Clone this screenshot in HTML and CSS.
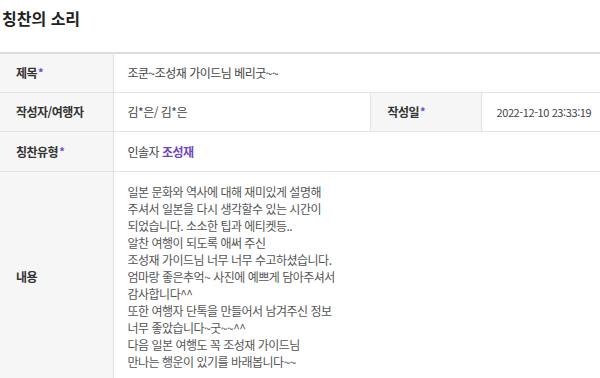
FILE: index.html
```html
<!DOCTYPE html>
<html lang="ko">
<head>
    <meta charset="UTF-8">
    <meta name="viewport" content="width=device-width, initial-scale=1.0">
    <title>칭찬의 소리</title>
    <link rel="stylesheet" href="styles.css">
</head>
<body>
    <section class="praise-view">
        <h2 class="page-title">칭찬의 소리</h2>

        <table class="view-table">
            <colgroup>
                <col class="col-th">
                <col>
                <col class="col-th2">
                <col class="col-date">
            </colgroup>
            <tbody>
                <tr class="row-title">
                    <th>제목<span class="req">*</span></th>
                    <td colspan="3">조쿤~조성재 가이드님 베리굿~~</td>
                </tr>
                <tr class="row-writer">
                    <th>작성자/여행자</th>
                    <td>김*은/ 김*은</td>
                    <th>작성일<span class="req">*</span></th>
                    <td class="date">2022-12-10 23:33:19</td>
                </tr>
                <tr class="row-type">
                    <th>칭찬유형<span class="req">*</span></th>
                    <td colspan="3">인솔자 <strong class="guide">조성재</strong></td>
                </tr>
                <tr class="row-content">
                    <th>내용</th>
                    <td colspan="3">
                        <p class="content">일본 문화와 역사에 대해 재미있게 설명해<br>
                        주셔서 일본을 다시 생각할수 있는 시간이<br>
                        되었습니다. 소소한 팁과 에티켓등..<br>
                        알찬 여행이 되도록 애써 주신<br>
                        조성재 가이드님 너무 너무 수고하셨습니다.<br>
                        엄마랑 좋은추억~ 사진에 예쁘게 담아주셔서<br>
                        감사합니다^^<br>
                        또한 여행자 단톡을 만들어서 남겨주신 정보<br>
                        너무 좋았습니다~굿~~^^<br>
                        다음 일본 여행도 꼭 조성재 가이드님<br>
                        만나는 행운이 있기를 바래봅니다~~</p>
                    </td>
                </tr>
            </tbody>
        </table>
    </section>
</body>
</html>
```

FILE: styles.css
```css
* {
    margin: 0;
    padding: 0;
    box-sizing: border-box;
}

body {
    font-family: "Noto Sans CJK KR", "Noto Sans", sans-serif;
    color: #333;
    background: #fff;
}

.page-title {
    font-size: 16px;
    font-weight: bold;
    color: #222;
    line-height: 22px;
    padding: 7px 0 0 2px;
    height: 52px;
}

.view-table {
    width: 100%;
    border-collapse: collapse;
    table-layout: fixed;
    border-top: 2px solid #ddd;
    font-size: 12px;
    letter-spacing: -0.5px;
}

.col-th {
    width: 113px;
}

.col-th2 {
    width: 111px;
}

.col-date {
    width: 118px;
}

.view-table th {
    background: #f6f6f6;
    font-weight: bold;
    color: #333;
    text-align: left;
    padding: 0 0 0 16px;
    border-bottom: 1px solid #e3e3e3;
    border-right: 1px solid #e3e3e3;
}

.view-table td {
    color: #444;
    padding: 0 0 0 14px;
    border-bottom: 1px solid #e3e3e3;
    border-right: 1px solid #e3e3e3;
}

.view-table td:last-child {
    border-right: none;
}

.row-title,
.row-writer {
    height: 39px;
}

.row-type {
    height: 40px;
}

.req {
    color: #7446d0;
    font-size: 11px;
    font-weight: bold;
    margin-left: 1px;
    vertical-align: 1px;
}

.guide {
    color: #6b46c1;
    font-weight: bold;
}

.date {
    font-size: 11px;
    color: #333;
    letter-spacing: -0.4px;
    white-space: nowrap;
}

.row-content td {
    padding: 11px 0 12px 14px;
}

.content {
    line-height: 17px;
    color: #555;
}
```
